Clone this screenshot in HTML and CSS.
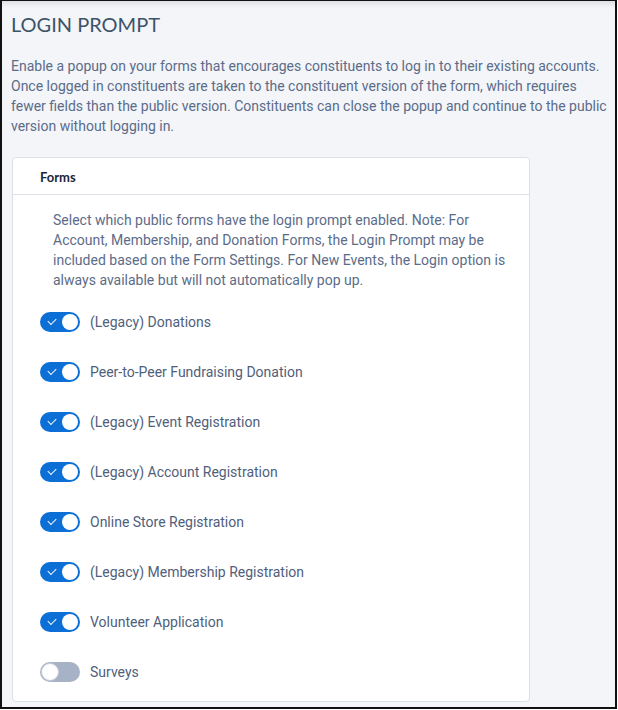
FILE: index.html
```html
<!DOCTYPE html>
<html lang="en">
<head>
    <meta charset="UTF-8">
    <meta name="viewport" content="width=device-width, initial-scale=1.0">
    <title>Login Prompt</title>
    <link rel="stylesheet" href="styles.css">
</head>
<body>
    <div class="frame">
        <h1>LOGIN PROMPT</h1>
        <p class="intro">Enable a popup on your forms that encourages constituents to log in to their existing accounts. Once logged in constituents are taken to the constituent version of the form, which requires fewer fields than the public version. Constituents can close the popup and continue to the public version without logging in.</p>
        <div class="card">
            <div class="card-header">Forms</div>
            <div class="card-body">
                <p class="desc">Select which public forms have the login prompt enabled. Note: For Account, Membership, and Donation Forms, the Login Prompt may be included based on the Form Settings. For New Events, the Login option is always available but will not automatically pop up.</p>
                <ul class="toggles">
                    <li><span class="switch on"></span>(Legacy) Donations</li>
                    <li><span class="switch on"></span>Peer-to-Peer Fundraising Donation</li>
                    <li><span class="switch on"></span>(Legacy) Event Registration</li>
                    <li><span class="switch on"></span>(Legacy) Account Registration</li>
                    <li><span class="switch on"></span>Online Store Registration</li>
                    <li><span class="switch on"></span>(Legacy) Membership Registration</li>
                    <li><span class="switch on"></span>Volunteer Application</li>
                    <li><span class="switch"></span>Surveys</li>
                </ul>
            </div>
        </div>
    </div>
</body>
</html>
```

FILE: styles.css
```css
body {
    margin: 0;
    background: #fff;
    font-family: Roboto, "Liberation Sans", sans-serif;
}
.frame {
    box-sizing: border-box;
    width: 617px;
    height: 709px;
    border: 2px solid #111;
    border-top-width: 1px;
    background: #f3f5f9;
    box-shadow: inset 0 7px 6px -5px rgba(0,0,0,0.12);
    padding: 0 0 0 9px;
    overflow: hidden;
}
h1 {
    font-family: Lato, sans-serif;
    font-weight: 400;
    font-size: 20px;
    color: #3d5368;
    margin: 11px 0 0 0;
    line-height: 24px;
}
.intro {
    font-size: 14px;
    line-height: 20px;
    color: #5b6c89;
    margin: 20px 0 0 0;
    width: 600px;
}
.card {
    background: #fff;
    border: 1px solid #dde1e7;
    border-radius: 4px;
    width: 516px;
    margin: 21px 0 0 1px;
}
.card-header {
    font-family: Lato, sans-serif;
    font-weight: 700;
    font-size: 13px;
    color: #1b2536;
    height: 36px;
    line-height: 38px;
    padding-left: 27px;
    border-bottom: 1px solid #dde1e7;
}
.card-body {
    padding: 15px 20px 19px 27px;
}
.desc {
    font-size: 14px;
    line-height: 20px;
    color: #5b6c89;
    margin: 0 0 22px 13px;
}
.toggles {
    list-style: none;
    margin: 0;
    padding: 0;
    display: flex;
    flex-direction: column;
    gap: 30px;
}
.toggles li {
    display: flex;
    align-items: center;
    height: 20px;
    font-size: 14px;
    color: #4f607b;
}
.switch {
    position: relative;
    box-sizing: border-box;
    width: 40px;
    height: 20px;
    border-radius: 10px;
    background: #a8b2c6;
    margin-right: 10px;
    flex-shrink: 0;
}
.switch:after {
    content: "";
    position: absolute;
    top: 1px;
    left: 1px;
    width: 18px;
    height: 18px;
    box-sizing: border-box;
    border-radius: 50%;
    background: #fff;
    border: 1px solid #c5ccd8;
}
.switch.on {
    background: #0b6fd6;
}
.switch.on:after {
    left: 22px;
    top: 2px;
    width: 16px;
    height: 16px;
    border: none;
}
.switch.on:before {
    content: "";
    position: absolute;
    left: 8px;
    top: 6px;
    width: 7px;
    height: 4px;
    border-left: 1.5px solid #fff;
    border-bottom: 1.5px solid #fff;
    transform: rotate(-45deg);
}
```
